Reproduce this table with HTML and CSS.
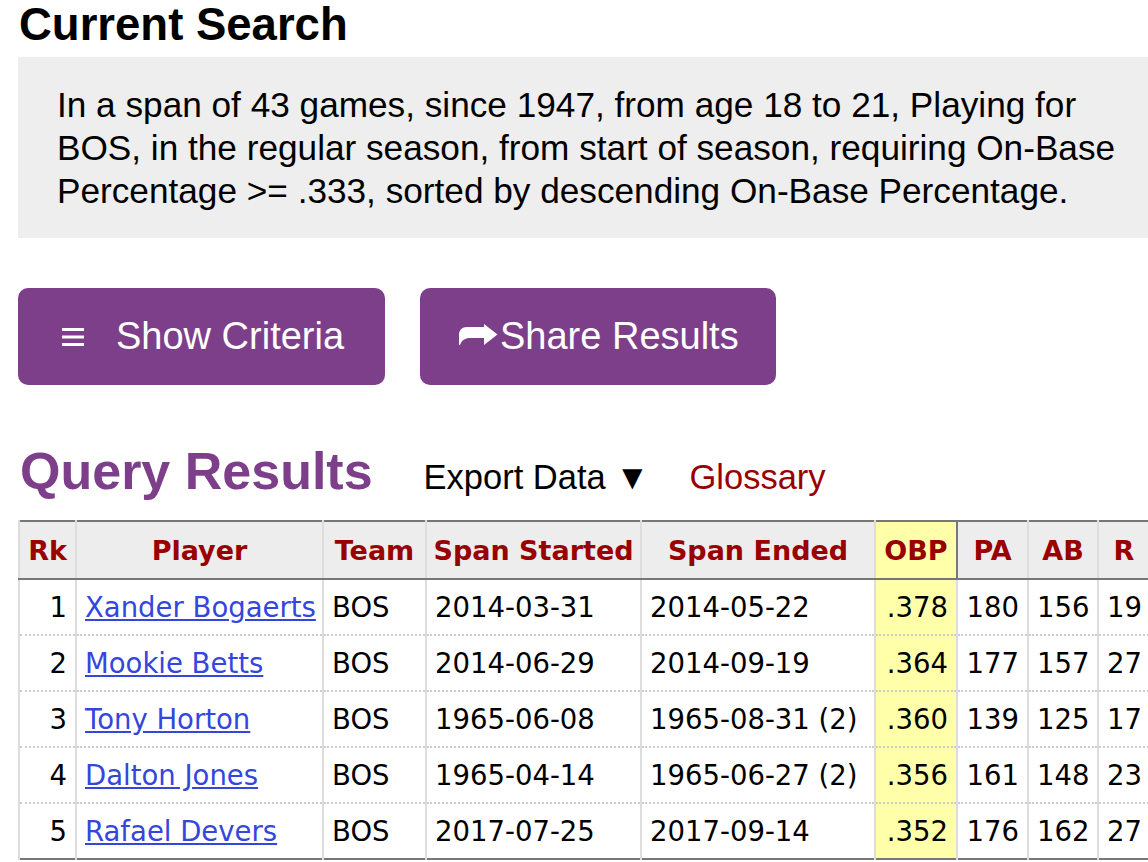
FILE: index.html
```html
<!DOCTYPE html>
<html lang="en">
<head>
<meta charset="utf-8">
<title>Span Finder Results</title>
<link rel="stylesheet" href="styles.css">
</head>
<body>
<div class="page">
  <h2 class="title">Current Search</h2>
  <div class="criteria">
    <p>In a span of 43 games, since 1947, from age 18 to 21, Playing for BOS, in the regular season, from start of season, requiring On-Base Percentage &gt;= .333, sorted by descending On-Base Percentage.</p>
  </div>
  <div class="actions">
    <button class="btn btn-criteria" type="button">
      <svg class="icon-menu" width="22" height="18" viewBox="0 0 22 18" aria-hidden="true"><rect x="0" y="0" width="22" height="3"/><rect x="0" y="7.5" width="22" height="3"/><rect x="0" y="15" width="22" height="3"/></svg>
      <span>Show Criteria</span>
    </button>
    <button class="btn btn-share" type="button">
      <svg class="icon-share" width="40" height="21" viewBox="0 0 40 21" aria-hidden="true"><path d="M26 0 L39.5 10.5 L26 21 L26 14 L12 14 C7 14 4 16 2 21 L1 21 L1 11 C1 6 4 3 9 3 L26 3 Z"/></svg>
      <span>Share Results</span>
    </button>
  </div>
  <div class="results-head">
    <h2 class="results-title">Query Results</h2>
    <span class="export">Export Data &#9660;</span>
    <a class="glossary" href="#">Glossary</a>
  </div>
  <table class="stats">
    <colgroup>
      <col class="c-rk"><col class="c-player"><col class="c-team"><col class="c-start"><col class="c-end"><col class="c-obp"><col class="c-pa"><col class="c-ab"><col class="c-r">
    </colgroup>
    <thead>
      <tr>
        <th>Rk</th><th>Player</th><th>Team</th><th>Span Started</th><th>Span Ended</th><th class="sorted">OBP</th><th>PA</th><th>AB</th><th>R</th>
      </tr>
    </thead>
    <tbody>
      <tr><td class="num">1</td><td><a href="#">Xander Bogaerts</a></td><td>BOS</td><td>2014-03-31</td><td>2014-05-22</td><td class="num obp">.378</td><td class="num">180</td><td class="num">156</td><td class="num">19</td></tr>
      <tr><td class="num">2</td><td><a href="#">Mookie Betts</a></td><td>BOS</td><td>2014-06-29</td><td>2014-09-19</td><td class="num obp">.364</td><td class="num">177</td><td class="num">157</td><td class="num">27</td></tr>
      <tr><td class="num">3</td><td><a href="#">Tony Horton</a></td><td>BOS</td><td>1965-06-08</td><td>1965-08-31 (2)</td><td class="num obp">.360</td><td class="num">139</td><td class="num">125</td><td class="num">17</td></tr>
      <tr><td class="num">4</td><td><a href="#">Dalton Jones</a></td><td>BOS</td><td>1965-04-14</td><td>1965-06-27 (2)</td><td class="num obp">.356</td><td class="num">161</td><td class="num">148</td><td class="num">23</td></tr>
      <tr><td class="num">5</td><td><a href="#">Rafael Devers</a></td><td>BOS</td><td>2017-07-25</td><td>2017-09-14</td><td class="num obp">.352</td><td class="num">176</td><td class="num">162</td><td class="num">27</td></tr>
    </tbody>
  </table>
</div>
</body>
</html>
```

FILE: styles.css
```css
html, body {
  margin: 0;
  padding: 0;
  overflow: hidden;
  background: #fff;
}

.page {
  padding-left: 18px;
  font-family: "Liberation Sans", Arial, Helvetica, sans-serif;
  color: #000;
}

.title {
  margin: 0;
  padding-left: 1px;
  font-size: 45.5px;
  line-height: 50px;
  font-weight: bold;
}

.criteria {
  margin-top: 7px;
  background: #eeeeee;
  padding: 26px 20px 26px 39px;
}

.criteria p {
  margin: 0;
  font-size: 35.2px;
  line-height: 43px;
}

.actions {
  display: flex;
  gap: 35px;
  margin-top: 50px;
}

.btn {
  box-sizing: border-box;
  display: flex;
  align-items: center;
  height: 97px;
  padding: 0 38px;
  border: none;
  border-radius: 10px;
  background: #7e3f8a;
  color: #fff;
  font-family: "Liberation Sans", Arial, Helvetica, sans-serif;
  font-size: 38px;
  white-space: nowrap;
  cursor: pointer;
}

.btn-criteria {
  width: 367px;
}

.btn-share {
  width: 356px;
}

.icon-menu {
  fill: #fff;
  margin-left: 6px;
  margin-right: 32px;
  flex: none;
}

.icon-share {
  fill: #fff;
  margin-right: 2px;
  margin-top: -4px;
  flex: none;
}

.results-head {
  display: flex;
  align-items: baseline;
  margin-top: 56px;
}

.results-title {
  margin: 0;
  padding-left: 2px;
  font-size: 52px;
  line-height: 60px;
  font-weight: bold;
  color: #7e3f8a;
}

.export {
  margin-left: 51px;
  font-size: 34.5px;
}

.glossary {
  margin-left: 40px;
  font-size: 34.5px;
  color: #990000;
  text-decoration: none;
}

.stats {
  margin-top: 19px;
  border-collapse: collapse;
  table-layout: fixed;
  width: 1131px;
  border: 2px solid #777;
  font-family: "DejaVu Sans", Verdana, sans-serif;
  font-size: 27.5px;
}

.c-rk { width: 57px; }
.c-player { width: 247px; }
.c-team { width: 103px; }
.c-start { width: 215px; }
.c-end { width: 234px; }
.c-obp { width: 82px; }
.c-pa { width: 71px; }
.c-ab { width: 70px; }
.c-r { width: 52px; }

.stats th {
  background: #ededed;
  color: #990000;
  font-weight: bold;
  font-size: 27px;
  line-height: 54px;
  padding: 2px 6px 0;
  text-align: center;
  white-space: nowrap;
  border-left: 2px solid #dddddd;
  border-right: 2px solid #dddddd;
  border-bottom: 2px solid #777;
}

.stats th.sorted {
  background: #ffffaa;
  border: 2px solid #777;
}

.stats td {
  line-height: 54px;
  padding: 0 8px;
  white-space: nowrap;
  text-align: left;
  border-left: 2px solid #dddddd;
  border-right: 2px solid #dddddd;
  border-top: 2px dotted #cccccc;
}

.stats td.num {
  text-align: right;
}

.stats td.obp {
  background: #ffffaa;
}

.stats a {
  color: #3446dc;
  text-decoration: underline;
}
```
